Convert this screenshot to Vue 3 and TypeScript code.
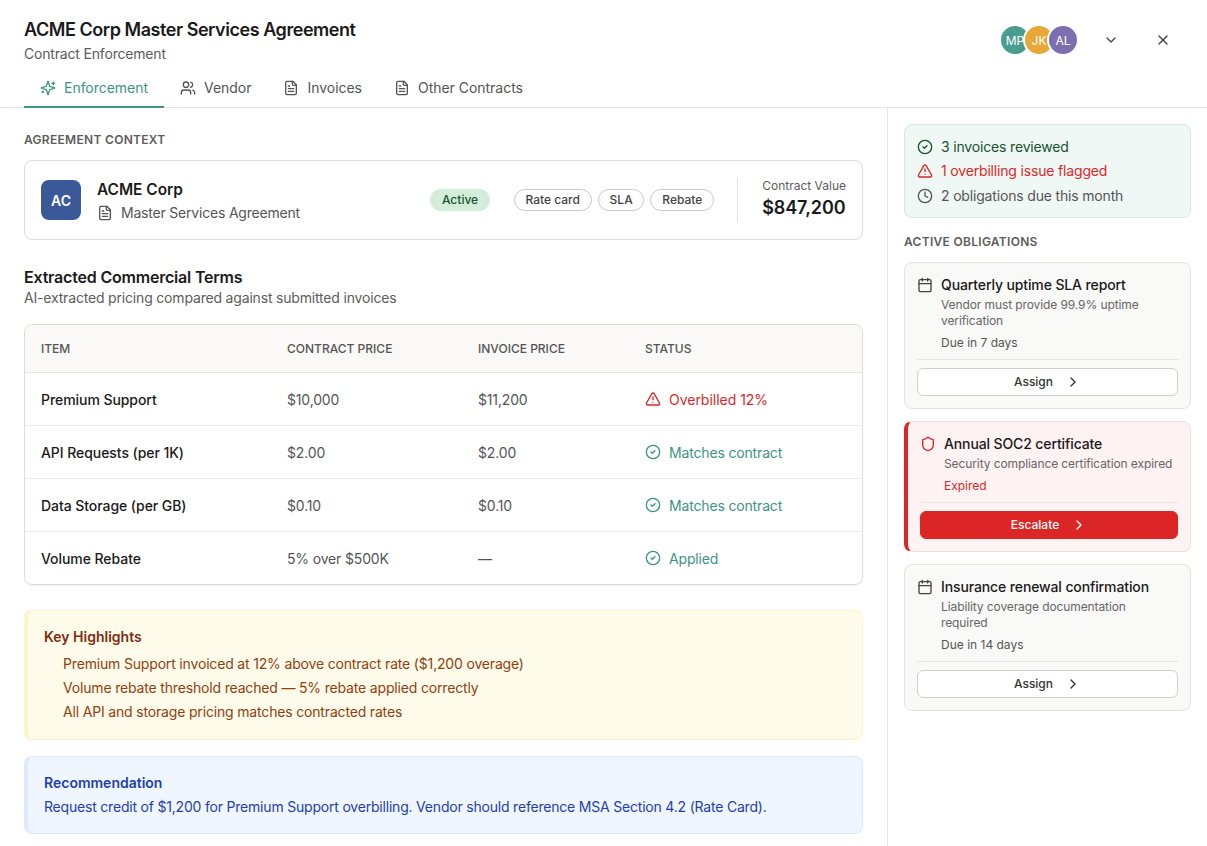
<script setup lang="ts">
import { h } from 'vue'

const circle = 'M22 12a10 10 0 1 1-20 0 10 10 0 0 1 20 0'
const icons: Record<string, string[]> = {
  sparkles: ['M9.937 15.5A2 2 0 0 0 8.5 14.063l-6.135-1.582a.5.5 0 0 1 0-.962L8.5 9.936A2 2 0 0 0 9.937 8.5l1.582-6.135a.5.5 0 0 1 .963 0L14.063 8.5A2 2 0 0 0 15.5 9.937l6.135 1.581a.5.5 0 0 1 0 .964L15.5 14.063a2 2 0 0 0-1.437 1.437l-1.582 6.135a.5.5 0 0 1-.963 0z', 'M20 3v4', 'M22 5h-4', 'M4 17v2', 'M5 18H3'],
  users: ['M16 21v-2a4 4 0 0 0-4-4H6a4 4 0 0 0-4 4v2', 'M13 7a4 4 0 1 1-8 0 4 4 0 0 1 8 0', 'M22 21v-2a4 4 0 0 0-3-3.87', 'M16 3.13a4 4 0 0 1 0 7.75'],
  file: ['M15 2H6a2 2 0 0 0-2 2v16a2 2 0 0 0 2 2h12a2 2 0 0 0 2-2V7Z', 'M14 2v4a2 2 0 0 0 2 2h4', 'M10 9H8', 'M16 13H8', 'M16 17H8'],
  check: [circle, 'm9 12 2 2 4-4'],
  alert: ['m21.73 18-8-14a2 2 0 0 0-3.48 0l-8 14A2 2 0 0 0 4 21h16a2 2 0 0 0 1.73-3', 'M12 9v4', 'M12 17h.01'],
  clock: [circle, 'M12 6v6l4 2'],
  calendar: ['M8 2v4', 'M16 2v4', 'M5 4h14a2 2 0 0 1 2 2v14a2 2 0 0 1-2 2H5a2 2 0 0 1-2-2V6a2 2 0 0 1 2-2z', 'M3 10h18'],
  shield: ['M20 13c0 5-3.5 7.5-7.66 8.95a1 1 0 0 1-.67-.01C7.5 20.5 4 18 4 13V6a1 1 0 0 1 1-1c2 0 4.5-1.2 6.24-2.72a1.17 1.17 0 0 1 1.52 0C14.51 3.81 17 5 19 5a1 1 0 0 1 1 1z'],
  right: ['m9 18 6-6-6-6'],
  down: ['m6 9 6 6 6-6'],
  x: ['M18 6 6 18', 'm6 6 12 12'],
}

const Ic = (p: { n: string; s?: number | string }) =>
  h(
    'svg',
    {
      width: p.s ?? 16,
      height: p.s ?? 16,
      viewBox: '0 0 24 24',
      fill: 'none',
      stroke: 'currentColor',
      'stroke-width': 2,
      'stroke-linecap': 'round',
      'stroke-linejoin': 'round',
      style: 'flex:none;display:block',
    },
    icons[p.n].map((d) => h('path', { d })),
  )

const tabs = [
  { label: 'Enforcement', icon: 'sparkles', active: true },
  { label: 'Vendor', icon: 'users', active: false },
  { label: 'Invoices', icon: 'file', active: false },
  { label: 'Other Contracts', icon: 'file', active: false },
]
const avatars = [
  { t: 'MP', c: '#4a9d8e' },
  { t: 'JK', c: '#e8a838' },
  { t: 'AL', c: '#7b6fb0' },
]
const rows = [
  { item: 'Premium Support', contract: '$10,000', invoice: '$11,200', status: 'Overbilled 12%', bad: true },
  { item: 'API Requests (per 1K)', contract: '$2.00', invoice: '$2.00', status: 'Matches contract', bad: false },
  { item: 'Data Storage (per GB)', contract: '$0.10', invoice: '$0.10', status: 'Matches contract', bad: false },
  { item: 'Volume Rebate', contract: '5% over $500K', invoice: '—', status: 'Applied', bad: false },
]
const highlights = [
  'Premium Support invoiced at 12% above contract rate ($1,200 overage)',
  'Volume rebate threshold reached — 5% rebate applied correctly',
  'All API and storage pricing matches contracted rates',
]
const obligations = [
  { title: 'Quarterly uptime SLA report', desc: 'Vendor must provide 99.9% uptime verification', due: 'Due in 7 days', urgent: false },
  { title: 'Annual SOC2 certificate', desc: 'Security compliance certification expired', due: 'Expired', urgent: true },
  { title: 'Insurance renewal confirmation', desc: 'Liability coverage documentation required', due: 'Due in 14 days', urgent: false },
]
</script>

<template>
  <div class="page">
    <header class="header">
      <div class="top">
        <div>
          <h1 class="title">ACME Corp Master Services Agreement</h1>
          <p class="subtitle">Contract Enforcement</p>
        </div>
        <div class="actions">
          <div class="avatars">
            <span v-for="a in avatars" :key="a.t" class="avatar" :style="{ background: a.c }">{{ a.t }}</span>
          </div>
          <button class="icon-btn chevron"><Ic n="down" /></button>
          <button class="icon-btn"><Ic n="x" /></button>
        </div>
      </div>
      <nav class="tabs">
        <a v-for="t in tabs" :key="t.label" class="tab" :class="{ active: t.active }">
          <Ic :n="t.icon" />
          <span>{{ t.label }}</span>
        </a>
      </nav>
    </header>

    <div class="body">
      <main class="main">
        <h2 class="label">AGREEMENT CONTEXT</h2>
        <section class="context">
          <div class="logo">AC</div>
          <div class="vendor">
            <div class="vendor-name">ACME Corp</div>
            <div class="vendor-doc"><Ic n="file" /><span>Master Services Agreement</span></div>
          </div>
          <span class="badge">Active</span>
          <div class="tags">
            <span class="tag">Rate card</span>
            <span class="tag">SLA</span>
            <span class="tag">Rebate</span>
          </div>
          <div class="value">
            <div class="value-label">Contract Value</div>
            <div class="value-num">$847,200</div>
          </div>
        </section>

        <h2 class="terms-title">Extracted Commercial Terms</h2>
        <p class="terms-sub">AI-extracted pricing compared against submitted invoices</p>

        <div class="table-wrap">
          <table class="table">
            <colgroup>
              <col style="width: 246px" />
              <col style="width: 191px" />
              <col style="width: 167px" />
              <col />
            </colgroup>
            <thead>
              <tr>
                <th>ITEM</th>
                <th>CONTRACT PRICE</th>
                <th>INVOICE PRICE</th>
                <th>STATUS</th>
              </tr>
            </thead>
            <tbody>
              <tr v-for="r in rows" :key="r.item">
                <td class="item">{{ r.item }}</td>
                <td class="price">{{ r.contract }}</td>
                <td class="price">{{ r.invoice }}</td>
                <td>
                  <span class="status" :class="{ bad: r.bad }">
                    <Ic :n="r.bad ? 'alert' : 'check'" />
                    {{ r.status }}
                  </span>
                </td>
              </tr>
            </tbody>
          </table>
        </div>

        <section class="note amber">
          <h3 class="note-title">Key Highlights</h3>
          <ul class="note-list">
            <li v-for="h2 in highlights" :key="h2">{{ h2 }}</li>
          </ul>
        </section>

        <section class="note blue">
          <h3 class="note-title tight">Recommendation</h3>
          <p class="note-text">Request credit of $1,200 for Premium Support overbilling. Vendor should reference MSA Section 4.2 (Rate Card).</p>
        </section>
      </main>

      <aside class="side">
        <section class="summary">
          <div class="sum-row green"><Ic n="check" /><span>3 invoices reviewed</span></div>
          <div class="sum-row red"><Ic n="alert" /><span>1 overbilling issue flagged</span></div>
          <div class="sum-row grey"><Ic n="clock" /><span>2 obligations due this month</span></div>
        </section>

        <h2 class="label side-label">ACTIVE OBLIGATIONS</h2>
        <div class="ob-list">
          <article v-for="o in obligations" :key="o.title" class="ob" :class="{ urgent: o.urgent }">
            <div class="ob-head">
              <span class="ob-icon"><Ic :n="o.urgent ? 'shield' : 'calendar'" /></span>
              <div>
                <div class="ob-title">{{ o.title }}</div>
                <div class="ob-desc">{{ o.desc }}</div>
                <div class="ob-due">{{ o.due }}</div>
              </div>
            </div>
            <button class="ob-btn">
              <span>{{ o.urgent ? 'Escalate' : 'Assign' }}</span>
              <Ic n="right" />
            </button>
          </article>
        </div>
      </aside>
    </div>
  </div>
</template>

<style>
html, body { margin: 0; background: #fff; }
</style>

<style scoped>
.page {
  height: 846px;
  overflow: hidden;
  display: flex;
  flex-direction: column;
  background: #fff;
  color: #1a1a1a;
  font-family: Inter, "Liberation Sans", sans-serif;
}
h1, h2, h3, p, ul { margin: 0; padding: 0; }
.header { border-bottom: 1px solid #e5e5e3; flex: none; height: 108px; box-sizing: border-box; }
.top { display: flex; justify-content: space-between; align-items: flex-start; padding: 16px 28px 0 24px; }
.title { font-size: 18px; line-height: 28px; font-weight: 600; letter-spacing: -0.45px; }
.subtitle { font-size: 14px; line-height: 20px; letter-spacing: -0.18px; color: #5c5c5c; }
.actions { display: flex; align-items: center; margin-top: 8px; }
.avatars { display: flex; margin-right: 16px; }
.avatar {
  width: 32px; height: 32px; box-sizing: border-box; border: 2px solid #fff; border-radius: 50%;
  color: #fff; font-size: 12px; font-weight: 400; display: flex; align-items: center; justify-content: center;
  margin-left: -8px; white-space: nowrap; overflow: hidden;
}
.avatar:first-child { margin-left: 0; }
.icon-btn {
  width: 32px; height: 32px; background: none; border: 0; padding: 0; color: #444;
  display: flex; align-items: center; justify-content: center;
}
.chevron { margin-right: 20px; }
.tabs { display: flex; margin-top: 4px; padding-left: 24px; }
.tab {
  display: flex; align-items: center; gap: 8px; padding: 10px 16px; height: 40px; box-sizing: border-box;
  font-size: 14px; line-height: 20px; letter-spacing: -0.03px; color: #555;
}
.tab.active { color: #3d9484; border-bottom: 2px solid #3d9484; padding-bottom: 8px; }

.body { flex: 1; display: flex; min-height: 0; }
.main { width: 888px; box-sizing: border-box; padding: 24px 24px 0; border-right: 1px solid #e5e5e3; flex: none; }
.label { font-size: 12px; line-height: 16px; font-weight: 600; letter-spacing: 0.3px; color: #5c5c5c; }
.context {
  margin-top: 12px; height: 80px; box-sizing: border-box; border: 1px solid #dcdcda; border-radius: 8px;
  padding: 16px; display: flex; align-items: center;
}
.logo {
  width: 40px; height: 40px; border-radius: 8px; background: #3b5998; color: #fff; font-size: 14px; font-weight: 600;
  display: flex; align-items: center; justify-content: center; flex: none;
}
.vendor { margin-left: 16px; flex: 1; }
.vendor-name { font-size: 15.4px; line-height: 22px; font-weight: 600; padding-top: 1px; }
.vendor-doc { display: flex; align-items: center; gap: 8px; font-size: 14px; letter-spacing: -0.2px; line-height: 20px; color: #555; margin-top: 2px; }
.badge {
  background: #d4edda; color: #14532d; font-size: 12px; font-weight: 500; line-height: 22px; padding: 0 11.5px;
  border-radius: 11px; margin-right: 24px;
}
.tags { display: flex; gap: 6px; }
.tag {
  border: 1px solid #c9c9c6; border-radius: 11px; font-size: 12px; font-weight: 500; line-height: 20px; padding: 0 10.85px; color: #444;
}
.value { margin-left: 23px; padding-left: 24px; border-left: 1px solid #e5e5e3; height: 44px; }
.value-label { font-size: 12px; line-height: 16px; color: #5c5c5c; }
.value-num { font-size: 18px; line-height: 28px; font-weight: 600; letter-spacing: -0.1px; }

.terms-title { font-size: 16px; line-height: 22px; font-weight: 600; letter-spacing: -0.2px; margin-top: 26px; }
.terms-sub { font-size: 14px; line-height: 20px; letter-spacing: -0.18px; color: #5c5c5c; }
.table-wrap {
  margin-top: 16px; border: 1px solid #dcdcda; border-radius: 8px; overflow: hidden; height: 261px; box-sizing: border-box;
  box-shadow: 0 1px 2px rgba(0, 0, 0, 0.06);
}
.table { width: 100%; border-collapse: collapse; table-layout: fixed; }
.table th {
  background: #faf9f7; height: 47px; padding: 0 16px; text-align: left; font-size: 12px; font-weight: 500;
  color: #555; border-bottom: 1px solid #e5e5e3;
}
.table td { height: 53px; padding: 0 16px; font-size: 14px; letter-spacing: -0.16px; border-bottom: 1px solid #ececea; box-sizing: border-box; }
.table tr:last-child td { border-bottom: 0; }
.table td.item { font-weight: 500; color: #1a1a1a; letter-spacing: -0.06px; }
.price { color: #555; }
.status { display: flex; align-items: center; gap: 8px; color: #3d9484; }
.status.bad { color: #dc2626; letter-spacing: -0.02px; }

.note { box-sizing: border-box; border-radius: 8px; border: 1px solid; border-left-width: 4px; padding: 16px; }
.amber { margin-top: 25px; height: 130px; background: #fffbeb; border-color: #fef3c7; color: #92400e; }
.amber .note-title { color: #7c2d12; }
.blue { margin-top: 16px; height: 78px; background: #eff6ff; border-color: #dbeafe; color: #1e40af; }
.note-title { font-size: 14px; line-height: 20px; font-weight: 600; }
.note-list { list-style: none; margin-top: 5px; padding-left: 19px; font-size: 14px; letter-spacing: -0.17px; line-height: 24px; }
.note-text { font-size: 14px; letter-spacing: -0.2px; line-height: 20px; margin-top: 4px; }

.side { flex: 1; box-sizing: border-box; padding: 16px; }
.summary {
  height: 94px; box-sizing: border-box; border: 1px solid #d5eadf; border-radius: 8px; background: #f0f8f5;
  padding: 12px; display: flex; flex-direction: column; gap: 4px;
}
.sum-row { display: flex; align-items: center; gap: 8px; font-size: 14px; line-height: 20px; letter-spacing: -0.17px; }
.green { color: #14532d; }
.red { color: #dc2626; }
.grey { color: #555; margin-top: 1px; }
.side-label { margin-top: 16px; }
.ob-list { margin-top: 12px; display: flex; flex-direction: column; gap: 12px; }
.ob { border: 1px solid #e3e3e0; border-radius: 8px; background: #f9f9f7; padding: 12px; }
.ob-head { display: flex; gap: 8px; padding-bottom: 8px; border-bottom: 1px solid #e5e5e3; }
.ob-icon { color: #444; padding-top: 2px; }
.ob-title { font-size: 14px; line-height: 20px; font-weight: 500; letter-spacing: -0.12px; color: #1a1a1a; }
.ob-desc { font-size: 12px; line-height: 16px; letter-spacing: -0.1px; color: #666; margin-top: 2px; max-width: 232px; }
.ob-due { font-size: 12px; line-height: 16px; color: #555; margin-top: 6px; }
.ob-btn {
  margin-top: 8px; width: 100%; height: 28px; box-sizing: border-box; border: 1px solid #d0d0cd; border-radius: 6px; background: #fff;
  display: flex; align-items: center; justify-content: center; gap: 12px; font: 500 12px/16px Inter, sans-serif; color: #333; padding: 0;
}
.ob.urgent { background: #fef2f2; border-left: 4px solid #dc2626; }
.urgent .ob-icon { color: #dc2626; }
.urgent .ob-due { color: #dc2626; }
.urgent .ob-btn { background: #dc2626; border-color: #dc2626; color: #fff; }
</style>
